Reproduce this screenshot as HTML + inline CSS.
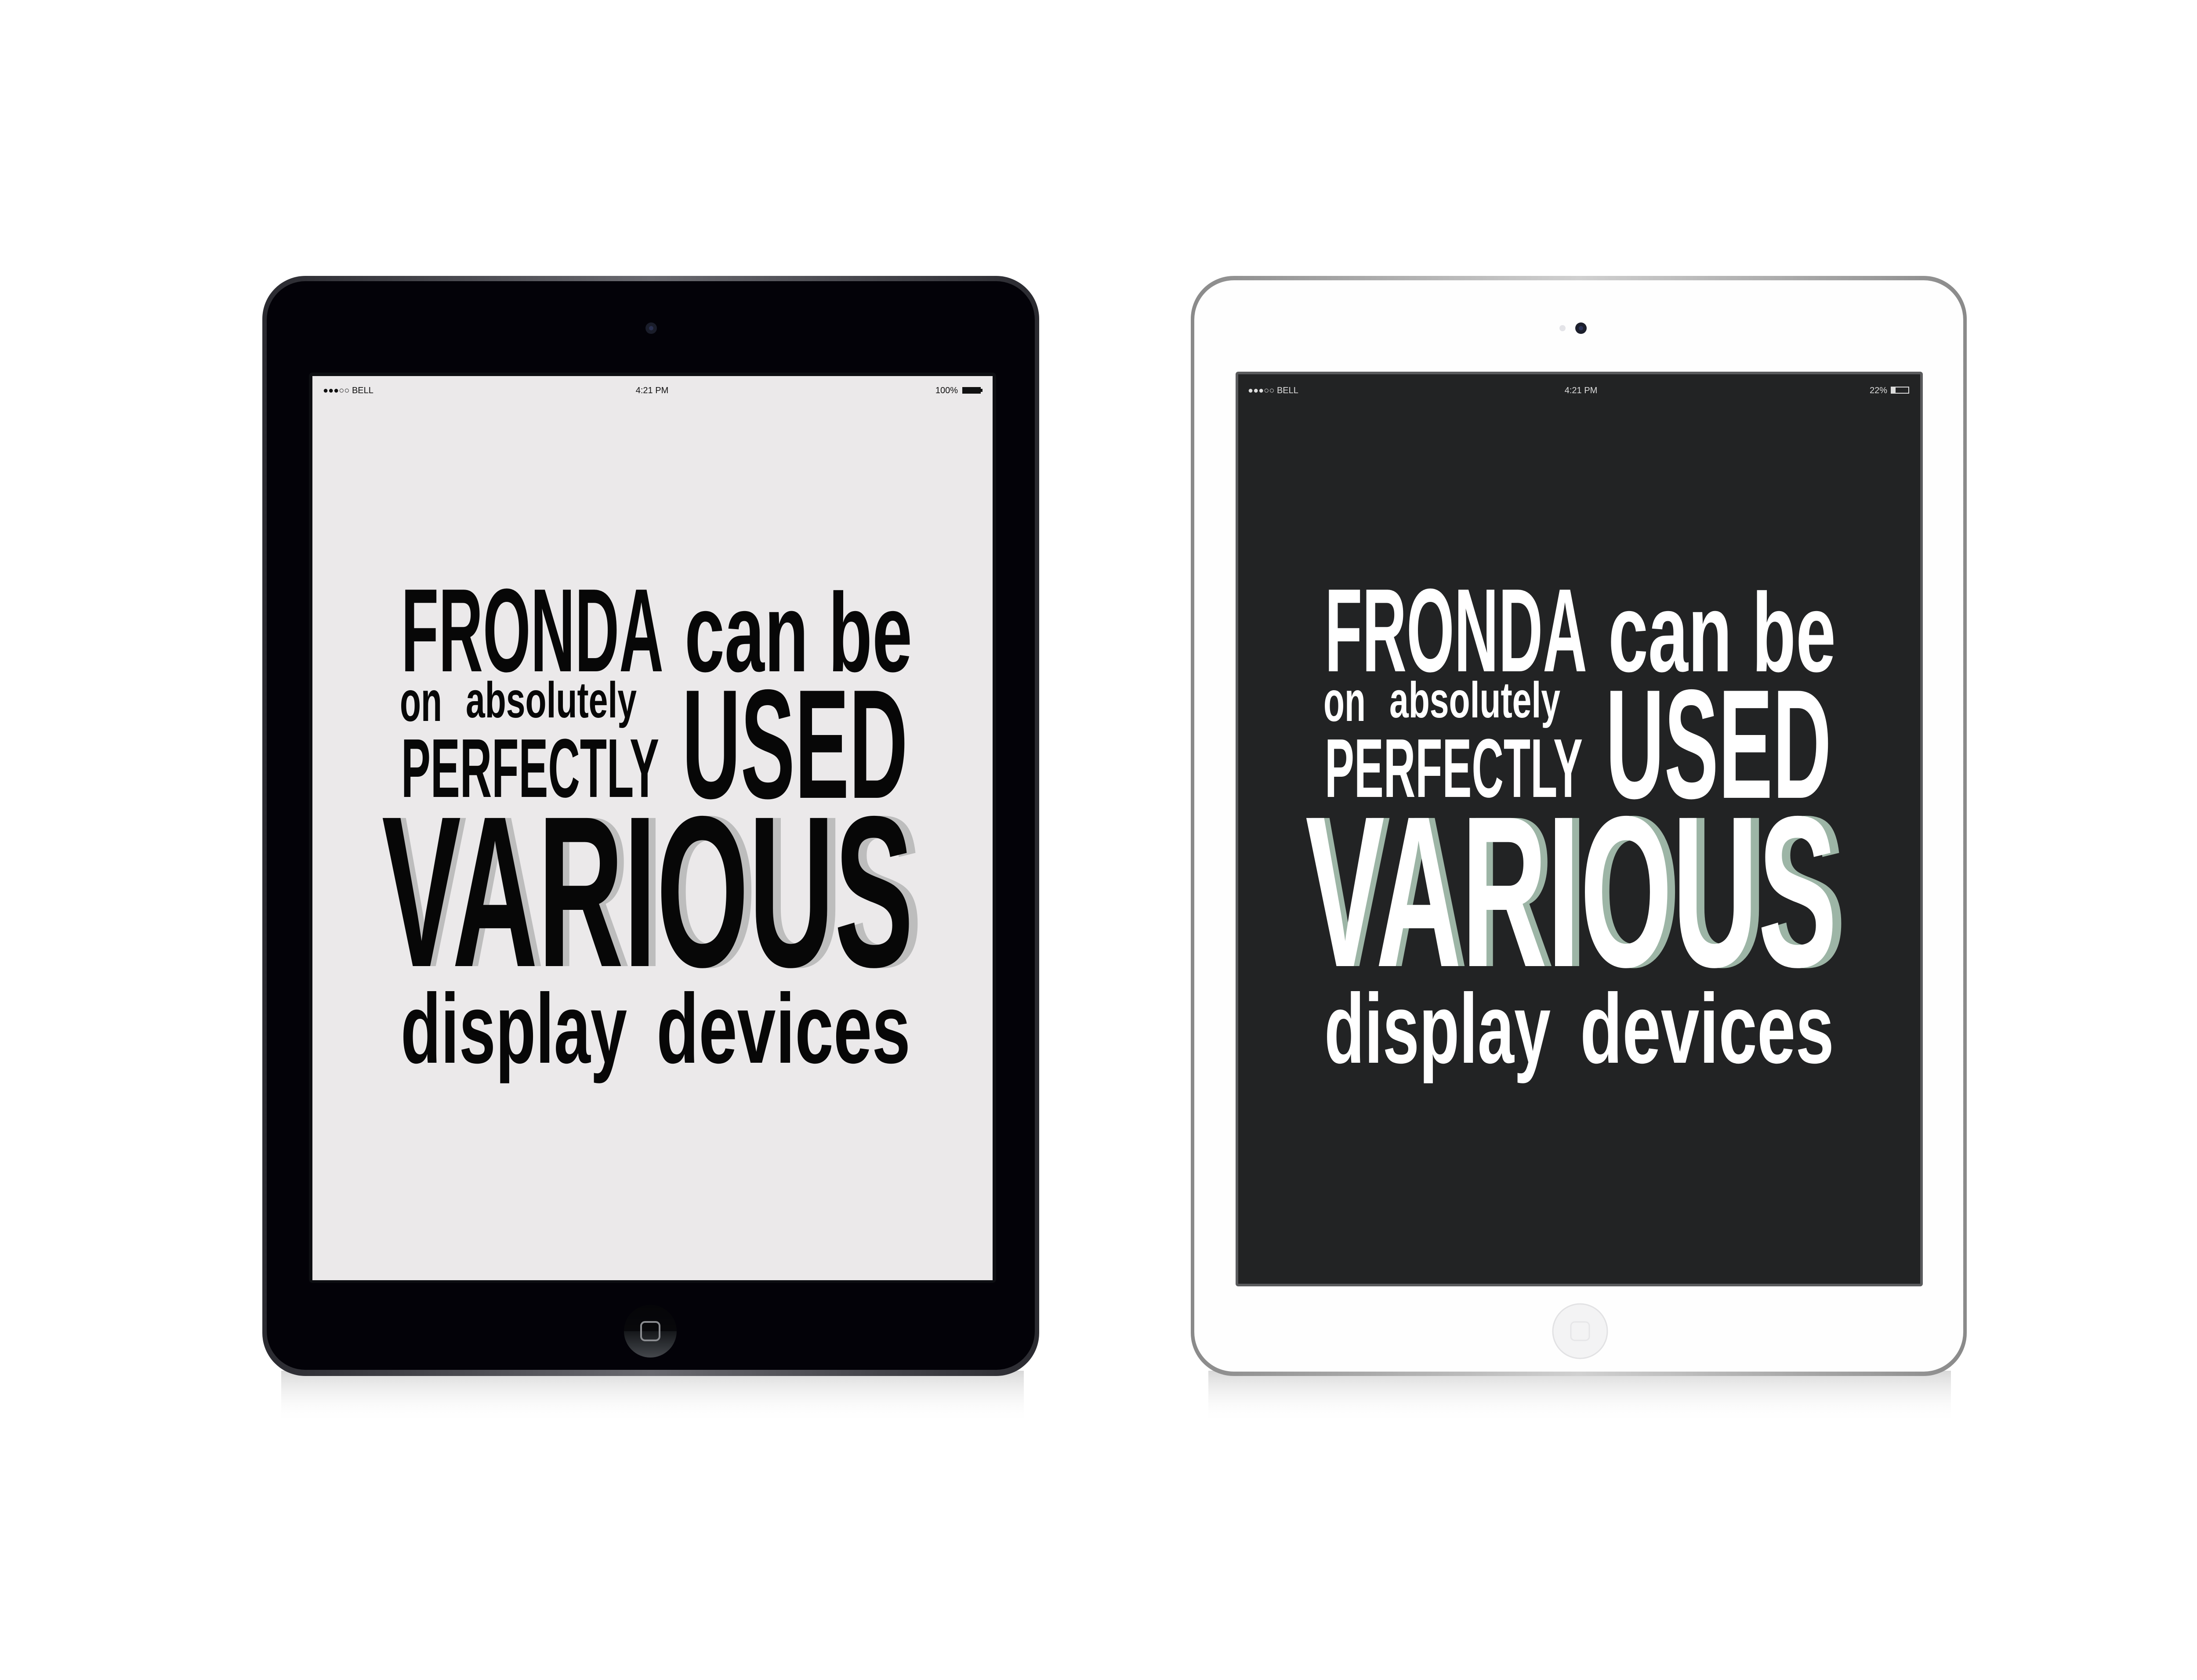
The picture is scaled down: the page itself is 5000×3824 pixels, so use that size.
<!DOCTYPE html>
<html><head><meta charset="utf-8"><style>
html,body{margin:0;padding:0;background:#fff;}
svg{display:block}
text{font-family:"Liberation Sans",sans-serif;}
</style></head><body>
<svg width="5000" height="3824" viewBox="0 0 5000 3824" xmlns="http://www.w3.org/2000/svg">
<defs>
<linearGradient id="shd" x1="0" y1="0" x2="0" y2="1">
<stop offset="0" stop-color="#d8d8d8"/><stop offset="1" stop-color="#fff" stop-opacity="0"/>
</linearGradient>
<linearGradient id="rimB" x1="0" y1="0" x2="1" y2="0">
<stop offset="0" stop-color="#2a2a30"/><stop offset="0.5" stop-color="#6a6a70"/><stop offset="1" stop-color="#2a2a30"/>
</linearGradient>
<linearGradient id="rimW" x1="0" y1="0" x2="1" y2="0">
<stop offset="0" stop-color="#8a8a8a"/><stop offset="0.5" stop-color="#d0d0d0"/><stop offset="1" stop-color="#8a8a8a"/>
</linearGradient>
<linearGradient id="hb" x1="0" y1="0" x2="0" y2="1">
<stop offset="0" stop-color="#050508"/><stop offset="0.5" stop-color="#08080b"/><stop offset="0.5" stop-color="#15171a"/><stop offset="1" stop-color="#44474c"/>
</linearGradient>
</defs>

<rect x="640" y="3120" width="1690" height="120" fill="url(#shd)"/>
<rect x="2750" y="3120" width="1690" height="120" fill="url(#shd)"/>

<!-- BLACK IPAD -->
<rect x="597" y="628" width="1768" height="2504" rx="98" fill="url(#rimB)"/>
<rect x="607" y="640" width="1748" height="2478" rx="88" fill="#030208"/>
<rect x="703" y="848" width="1564" height="2072" rx="8" fill="#0d0e12"/>
<rect x="711" y="856" width="1548" height="2058" fill="#ebe9ea"/>
<circle cx="1482" cy="747" r="13" fill="#1a1d2a"/><circle cx="1482" cy="747" r="5" fill="#2a3050"/>
<circle cx="1480" cy="3030" r="60" fill="url(#hb)"/>
<rect x="1459" y="3009" width="42" height="42" rx="9" fill="none" stroke="#8a8c90" stroke-width="4"/>
<g font-size="20" fill="#111">
<text x="735" y="895">●●●○○ BELL</text>
<text x="1484" y="895" text-anchor="middle">4:21 PM</text>
<text x="2180" y="895" text-anchor="end">100%</text>
</g>
<rect x="2190" y="881" width="42" height="15" fill="#111"/><rect x="2232" y="885" width="4" height="7" fill="#111"/>
<g font-weight="bold" fill="#070707">
<text x="913" y="1528" font-size="270" textLength="597" lengthAdjust="spacingAndGlyphs">FRONDA</text>
<text x="1558" y="1528" font-size="255" textLength="518" lengthAdjust="spacingAndGlyphs">can be</text>
<text x="910" y="1641" font-size="130" textLength="96" lengthAdjust="spacingAndGlyphs">on</text>
<text x="1060" y="1633" font-size="115" textLength="389" lengthAdjust="spacingAndGlyphs">absolutely</text>
<text x="913" y="1814" font-size="190" textLength="587" lengthAdjust="spacingAndGlyphs">PERFECTLY</text>
<text x="1552" y="1816" font-size="354" textLength="514" lengthAdjust="spacingAndGlyphs">USED</text>
<text x="881" y="2199" font-size="490" textLength="1218" lengthAdjust="spacingAndGlyphs" fill="#bdbdbd">VARIOUS</text>
<text x="869" y="2199" font-size="490" textLength="1210" lengthAdjust="spacingAndGlyphs">VARIOUS</text>
<text x="912" y="2419" font-size="225" textLength="515" lengthAdjust="spacingAndGlyphs">display</text>
<text x="1494" y="2419" font-size="225" textLength="578" lengthAdjust="spacingAndGlyphs">devices</text>
</g>

<!-- WHITE IPAD -->
<rect x="2710" y="628" width="1766" height="2504" rx="98" fill="url(#rimW)"/>
<rect x="2718" y="638" width="1750" height="2484" rx="90" fill="#fefefe"/>
<rect x="2812" y="846" width="1564" height="2082" rx="6" fill="#5a5b5d"/>
<rect x="2818" y="852" width="1552" height="2070" fill="#222324"/>
<circle cx="3556" cy="747" r="7" fill="#e4e4e8"/>
<circle cx="3598" cy="747" r="13" fill="#1c1f2c"/><circle cx="3598" cy="747" r="5" fill="#2c3358"/>
<circle cx="3596" cy="3030" r="62" fill="#f3f3f4" stroke="#e2e2e4" stroke-width="3"/>
<rect x="3575" y="3009" width="42" height="42" rx="9" fill="none" stroke="#e6e6e8" stroke-width="3"/>
<g font-size="20" fill="#ddd">
<text x="2840" y="895">●●●○○ BELL</text>
<text x="3598" y="895" text-anchor="middle">4:21 PM</text>
<text x="4295" y="895" text-anchor="end">22%</text>
</g>
<rect x="4304" y="881" width="40" height="14" fill="none" stroke="#ddd" stroke-width="2"/><rect x="4305" y="882" width="9" height="12" fill="#ddd"/>
<g font-weight="bold" fill="#fff">
<text x="3015" y="1528" font-size="270" textLength="597" lengthAdjust="spacingAndGlyphs">FRONDA</text>
<text x="3660" y="1528" font-size="255" textLength="518" lengthAdjust="spacingAndGlyphs">can be</text>
<text x="3012" y="1641" font-size="130" textLength="96" lengthAdjust="spacingAndGlyphs">on</text>
<text x="3162" y="1633" font-size="115" textLength="389" lengthAdjust="spacingAndGlyphs">absolutely</text>
<text x="3015" y="1814" font-size="190" textLength="587" lengthAdjust="spacingAndGlyphs">PERFECTLY</text>
<text x="3654" y="1816" font-size="354" textLength="514" lengthAdjust="spacingAndGlyphs">USED</text>
<text x="2983" y="2199" font-size="490" textLength="1218" lengthAdjust="spacingAndGlyphs" fill="#9db5a6">VARIOUS</text>
<text x="2971" y="2199" font-size="490" textLength="1210" lengthAdjust="spacingAndGlyphs">VARIOUS</text>
<text x="3014" y="2419" font-size="225" textLength="515" lengthAdjust="spacingAndGlyphs">display</text>
<text x="3596" y="2419" font-size="225" textLength="578" lengthAdjust="spacingAndGlyphs">devices</text>
</g>
</svg>
</body></html>
